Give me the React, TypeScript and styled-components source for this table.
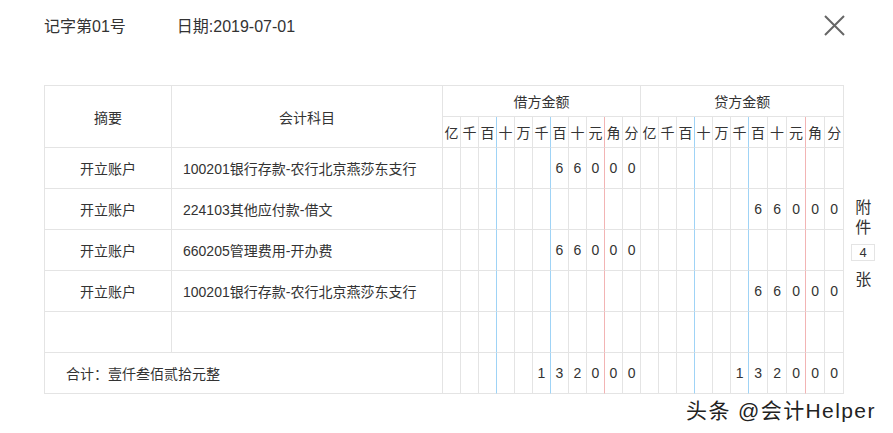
import styled, { createGlobalStyle } from 'styled-components'

const FONT = '"Liberation Sans", "Noto Sans CJK SC", sans-serif'
const LINE = '#e4e4e4'
const BLUE = '#9fd3f6'
const RED = '#f2b4b4'

const UNITS = ['亿', '千', '百', '十', '万', '千', '百', '十', '元', '角', '分']

type Entry = { summary: string; account: string; debit: string; credit: string }

const entries: Entry[] = [
  { summary: '开立账户', account: '100201银行存款-农行北京燕莎东支行', debit: '66000', credit: '' },
  { summary: '开立账户', account: '224103其他应付款-借文', debit: '', credit: '66000' },
  { summary: '开立账户', account: '660205管理费用-开办费', debit: '66000', credit: '' },
  { summary: '开立账户', account: '100201银行存款-农行北京燕莎东支行', debit: '', credit: '66000' },
  { summary: '', account: '', debit: '', credit: '' },
]

// right-align an amount (in fen) into the 11 unit slots
const toSlots = (amount: string) => {
  const slots: string[] = Array(11).fill('')
  const chars = amount.split('')
  chars.forEach((c, i) => {
    slots[11 - chars.length + i] = c
  })
  return slots
}

const lineColor = (i: number) => (i === 8 ? RED : i === 2 || i === 5 ? BLUE : LINE)

const GlobalStyle = createGlobalStyle`
  body {
    margin: 0;
    background: #fff;
    font-family: ${FONT};
    color: #333;
  }
`

const Page = styled.div`
  position: relative;
  width: 893px;
  height: 433px;
  padding-left: 44px;
  box-sizing: border-box;
`

const Header = styled.div`
  display: flex;
  align-items: center;
  justify-content: space-between;
  width: 801px;
  height: 50px;
`

const Meta = styled.div`
  display: flex;
  gap: 51px;
  font-size: 16px;
  color: #333;
`

const CloseButton = styled.button`
  display: flex;
  padding: 0;
  border: none;
  background: none;
  cursor: pointer;
`

const Body = styled.div`
  display: flex;
  margin-top: 35px;
`

const Table = styled.table`
  table-layout: fixed;
  border-collapse: separate;
  border-spacing: 0;
  width: 800px;
  border-top: 1px solid ${LINE};
  border-left: 1px solid ${LINE};
  font-size: 14px;
  color: #333;
`

const Cell = styled.td<{ $line?: string; $h: number; $align?: string; $pad?: number }>`
  box-sizing: border-box;
  height: ${(p) => p.$h}px;
  padding: 0 0 0 ${(p) => p.$pad ?? 0}px;
  border-right: 1px solid ${(p) => p.$line ?? LINE};
  border-bottom: 1px solid ${LINE};
  text-align: ${(p) => p.$align ?? 'center'};
  font-weight: normal;
  white-space: nowrap;
  overflow: hidden;
`

const Attach = styled.div`
  display: flex;
  flex-direction: column;
  align-items: center;
  width: 38px;
  padding-top: 113px;
  font-size: 16px;
  line-height: 20px;
  color: #333;
`

const AttachCount = styled.div`
  box-sizing: border-box;
  width: 24px;
  height: 17px;
  margin: 6px 0 9px;
  border: 1px solid ${LINE};
  font-size: 13px;
  line-height: 15px;
  text-align: center;
`

const Watermark = styled.div`
  position: absolute;
  left: 686px;
  top: 394px;
  font-size: 21px;
  letter-spacing: 1.4px;
  color: #222;
  text-shadow: 0 0 2px #fff, 0 0 2px #fff;
`

const DigitCells = ({ amount, h }: { amount: string; h: number }) => (
  <>
    {toSlots(amount).map((d, i) => (
      <Cell key={i} $h={h} $line={lineColor(i)}>
        {d}
      </Cell>
    ))}
  </>
)

export default function App() {
  const widths = [127, 271, ...Array(11).fill(18), ...Array(6).fill(18), ...Array(5).fill(19)]
  return (
    <>
      <GlobalStyle />
      <Page>
        <Header>
          <Meta>
            <span>记字第01号</span>
            <span>日期:2019-07-01</span>
          </Meta>
          <CloseButton aria-label="close">
            <svg width="21" height="21" viewBox="0 0 21 21">
              <path d="M1 1 L20 20 M20 1 L1 20" stroke="#666" strokeWidth="2" />
            </svg>
          </CloseButton>
        </Header>
        <Body>
          <Table>
            <colgroup>
              {widths.map((w, i) => (
                <col key={i} style={{ width: w }} />
              ))}
            </colgroup>
            <thead>
              <tr>
                <Cell as="th" rowSpan={2} $h={31}>
                  摘要
                </Cell>
                <Cell as="th" rowSpan={2} $h={31}>
                  会计科目
                </Cell>
                <Cell as="th" colSpan={11} $h={31}>
                  借方金额
                </Cell>
                <Cell as="th" colSpan={11} $h={31}>
                  贷方金额
                </Cell>
              </tr>
              <tr>
                {[...UNITS, ...UNITS].map((u, i) => (
                  <Cell as="th" key={i} $h={31} $line={lineColor(i % 11)}>
                    {u}
                  </Cell>
                ))}
              </tr>
            </thead>
            <tbody>
              {entries.map((e, r) => (
                <tr key={r}>
                  <Cell $h={41}>{e.summary}</Cell>
                  <Cell $h={41} $align="left" $pad={11}>
                    {e.account}
                  </Cell>
                  <DigitCells amount={e.debit} h={41} />
                  <DigitCells amount={e.credit} h={41} />
                </tr>
              ))}
              <tr>
                <Cell colSpan={2} $h={41} $align="left" $pad={21}>
                  合计：壹仟叁佰贰拾元整
                </Cell>
                <DigitCells amount="132000" h={41} />
                <DigitCells amount="132000" h={41} />
              </tr>
            </tbody>
          </Table>
          <Attach>
            <span>附</span>
            <span>件</span>
            <AttachCount>4</AttachCount>
            <span>张</span>
          </Attach>
        </Body>
        <Watermark>头条 @会计Helper</Watermark>
      </Page>
    </>
  )
}
